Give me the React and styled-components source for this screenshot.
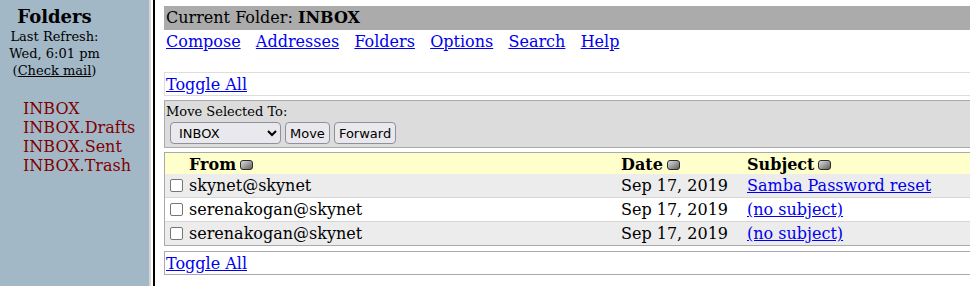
import * as React from "react";
import styled, { createGlobalStyle } from "styled-components";

const GlobalStyle = createGlobalStyle`
  html, body {
    margin: 0;
    padding: 0;
    background: #ffffff;
    font-family: "DejaVu Serif", serif;
    color: #000;
  }
  a {
    color: #0000ee;
  }
`;

const messages = [
  { from: "skynet@skynet", date: "Sep 17, 2019", subject: "Samba Password reset" },
  { from: "serenakogan@skynet", date: "Sep 17, 2019", subject: "(no subject)" },
  { from: "serenakogan@skynet", date: "Sep 17, 2019", subject: "(no subject)" },
];

const folders = ["INBOX", "INBOX.Drafts", "INBOX.Sent", "INBOX.Trash"];
const navLinks = ["Compose", "Addresses", "Folders", "Options", "Search", "Help"];

const SortIcon = () => (
  <SortSvg width="13" height="10" viewBox="0 0 13 10">
    <defs>
      <linearGradient id="sortg" x1="0" y1="0" x2="1" y2="1">
        <stop offset="0" stopColor="#e4e4e4" />
        <stop offset="1" stopColor="#5a5a5a" />
      </linearGradient>
    </defs>
    <rect x="0.5" y="0.5" width="12" height="9" rx="2.5" fill="url(#sortg)" stroke="#2c2c2c" />
  </SortSvg>
);

const App = () => {
  return (
    <>
      <GlobalStyle />
      <Frames>
        <LeftPanel>
          <FolderHead>
            <Title>Folders</Title>
            <Refresh>
              Last Refresh:
              <br />
              Wed, 6:01 pm
              <br />
              (<CheckLink href="#">Check mail</CheckLink>)
            </Refresh>
          </FolderHead>
          <FolderList>
            {folders.map((f) => (
              <FolderLink key={f} href="#">
                {f}
              </FolderLink>
            ))}
          </FolderList>
        </LeftPanel>
        <Divider />
        <Main>
          <FolderBar>
            Current Folder: <b>INBOX</b>
          </FolderBar>
          <Nav>
            {navLinks.map((l) => (
              <a key={l} href="#">
                {l}
              </a>
            ))}
          </Nav>
          <ToggleBox $tone="#dddddd" $top="20px">
            <a href="#">Toggle All</a>
          </ToggleBox>
          <MoveBox>
            <MoveLabel>Move Selected To:</MoveLabel>
            <MoveControls>
              <Select defaultValue="INBOX">
                {folders.map((f) => (
                  <option key={f}>{f}</option>
                ))}
              </Select>
              <Button>Move</Button>
              <Button>Forward</Button>
            </MoveControls>
          </MoveBox>
          <MessageTable>
            <HeaderRow>
              <span />
              <HeadCell>
                From <SortIcon />
              </HeadCell>
              <HeadCell>
                Date <SortIcon />
              </HeadCell>
              <HeadCell>
                Subject <SortIcon />
              </HeadCell>
            </HeaderRow>
            {messages.map((m, i) => (
              <Row key={i} $odd={i % 2 === 0} $first={i === 0}>
                <CheckCell>
                  <Check type="checkbox" />
                </CheckCell>
                <Cell>{m.from}</Cell>
                <Cell>{m.date}</Cell>
                <Cell>
                  <a href="#">{m.subject}</a>
                </Cell>
              </Row>
            ))}
          </MessageTable>
          <ToggleBox $tone="#aaaaaa" $top="5px">
            <a href="#">Toggle All</a>
          </ToggleBox>
        </Main>
      </Frames>
    </>
  );
};

const Frames = styled.div`
  display: flex;
  width: 100%;
  height: 100vh;
  overflow: hidden;
`;

const LeftPanel = styled.div`
  width: 149px;
  flex-shrink: 0;
  background-color: #a3b8c7;
  box-sizing: border-box;
  padding-top: 5px;
`;

const FolderHead = styled.div`
  width: 109px;
  text-align: center;
`;

const Title = styled.div`
  font-size: 18px;
  font-weight: bold;
  line-height: 23px;
`;

const Refresh = styled.div`
  font-size: 13px;
  line-height: 17px;
`;

const CheckLink = styled.a`
  && {
    color: #000;
  }
`;

const FolderList = styled.div`
  display: flex;
  flex-direction: column;
  padding-left: 23px;
  margin-top: 20px;
`;

const FolderLink = styled.a`
  && {
    color: #800000;
    text-decoration: none;
  }
  font-size: 16px;
  line-height: 19px;
`;

const Divider = styled.div`
  width: 2px;
  flex-shrink: 0;
  background: #ffffff;
  border-left: 2px solid #d6d6d6;
  border-right: 2px solid #000000;
`;

const Main = styled.div`
  flex: 1;
  min-width: 0;
  padding: 6px 0 0 9px;
  font-size: 16px;
  overflow: hidden;
`;

const FolderBar = styled.div`
  background-color: #ababab;
  height: 24px;
  line-height: 24px;
  padding-left: 2px;
  white-space: nowrap;
`;

const Nav = styled.div`
  display: flex;
  gap: 15.25px;
  padding-left: 2px;
  line-height: 21px;
  margin-top: 1px;
`;

const ToggleBox = styled.div`
  margin-top: ${(p) => p.$top};
  border: 1px solid ${(p) => p.$tone};
  border-right: none;
  height: 22px;
  line-height: 23px;
  padding-left: 1px;
`;

const MoveBox = styled.div`
  margin-top: 4px;
  background-color: #dcdcdc;
  border: 1px solid #aaaaaa;
  border-right: none;
  height: 46px;
  padding-left: 1px;
  box-sizing: content-box;
`;

const MoveLabel = styled.div`
  font-size: 13px;
  line-height: 18px;
  margin-top: 2px;
`;

const MoveControls = styled.div`
  display: flex;
  gap: 4px;
  padding-left: 4px;
  margin-top: 1px;
`;

const Select = styled.select`
  width: 111px;
  height: 22px;
  font-family: "DejaVu Sans", sans-serif;
  font-size: 13px;
  background-color: #e9e9ed;
  border: 1px solid #8f8f9d;
  border-radius: 4px;
  padding: 0 2px 0 4px;
  color: #000;
`;

const Button = styled.button`
  height: 22px;
  font-family: "DejaVu Sans", sans-serif;
  font-size: 13px;
  background-color: #e9e9ed;
  border: 1px solid #8f8f9d;
  border-radius: 4px;
  padding: 0 4px;
  color: #000;
`;

const MessageTable = styled.div`
  margin-top: 4px;
  border: 1px solid #aaaaaa;
  border-right: none;
`;

const gridCols = "24px 432px 126px 1fr";

const HeaderRow = styled.div`
  display: grid;
  grid-template-columns: ${gridCols};
  height: 21px;
  align-items: center;
  background-color: #ffffcc;
  padding-top: 1px;
  box-sizing: border-box;
`;

const HeadCell = styled.div`
  font-weight: bold;
  display: flex;
  align-items: center;
  gap: 4px;
  white-space: nowrap;
`;

const SortSvg = styled.svg`
  display: block;
  margin-top: 1px;
`;

const Row = styled.div`
  display: grid;
  grid-template-columns: ${gridCols};
  height: 23px;
  align-items: center;
  background-color: ${(p) => (p.$odd ? "#ececec" : "#ffffff")};
  border-top: ${(p) => (p.$first ? "none" : "1px solid #d6d6d6")};
`;

const CheckCell = styled.div`
  display: flex;
  align-items: center;
  padding-left: 5px;
`;

const Check = styled.input`
  appearance: none;
  width: 13px;
  height: 13px;
  margin: 0;
  border: 1px solid #767676;
  border-radius: 2px;
  background: #fff;
  box-sizing: border-box;
`;

const Cell = styled.div`
  white-space: nowrap;
`;

export default App;
